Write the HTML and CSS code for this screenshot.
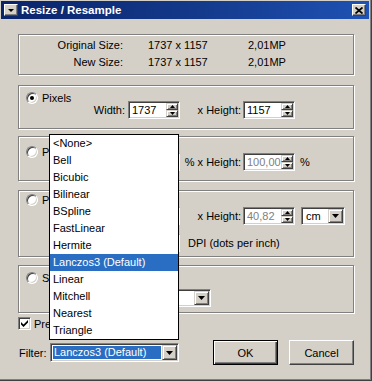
FILE: index.html
```html
<!DOCTYPE html>
<html>
<head>
<meta charset="utf-8">
<link rel="stylesheet" href="styles.css">
</head>
<body>
<div class="window">
  <div class="titlebar">
    <div class="sysbtn"><svg width="6" height="3" viewBox="0 0 6 3"><path d="M0 0 H6 L3 3Z" fill="#000"/></svg></div>
    <div class="title">Resize / Resample</div>
    <div class="closebtn"><svg width="8" height="7" viewBox="0 0 8 7"><path d="M0.5 0.5 L7.5 6.5 M7.5 0.5 L0.5 6.5" stroke="#000" stroke-width="1.8" fill="none"/></svg></div>
  </div>

  <div class="content">
    <div class="group g1">
      <div class="sizes">
        <div class="slabel">Original Size:</div><div>1737 x 1157</div><div>2,01MP</div>
        <div class="slabel">New Size:</div><div>1737 x 1157</div><div>2,01MP</div>
      </div>
    </div>

    <div class="group g2">
      <div class="optrow">
        <span class="radio on"></span><span class="optlabel">Pixels</span>
      </div>
      <div class="frow">
        <span class="lab1">Width:</span>
        <div class="field"><span class="val">1737</span>
          <div class="spin">
            <span class="sb"><svg width="5" height="3" viewBox="0 0 5 3"><path d="M0 3 L2.5 0 L5 3Z"/></svg></span>
            <span class="sb"><svg width="5" height="3" viewBox="0 0 5 3"><path d="M0 0 L5 0 L2.5 3Z"/></svg></span>
          </div>
        </div>
        <span class="lab2">x Height:</span>
        <div class="field"><span class="val">1157</span>
          <div class="spin">
            <span class="sb"><svg width="5" height="3" viewBox="0 0 5 3"><path d="M0 3 L2.5 0 L5 3Z"/></svg></span>
            <span class="sb"><svg width="5" height="3" viewBox="0 0 5 3"><path d="M0 0 L5 0 L2.5 3Z"/></svg></span>
          </div>
        </div>
      </div>
    </div>

    <div class="group g3">
      <div class="optrow">
        <span class="radio"></span><span class="optlabel">Percent</span>
      </div>
      <div class="frow">
        <span class="lab1"></span>
        <div class="field"><span class="val dis"></span>
          <div class="spin">
            <span class="sb"><svg width="5" height="3" viewBox="0 0 5 3"><path d="M0 3 L2.5 0 L5 3Z"/></svg></span>
            <span class="sb"><svg width="5" height="3" viewBox="0 0 5 3"><path d="M0 0 L5 0 L2.5 3Z"/></svg></span>
          </div>
        </div>
        <span class="lab2">% x Height:</span>
        <div class="field"><span class="val dis">100,00</span>
          <div class="spin">
            <span class="sb"><svg width="5" height="3" viewBox="0 0 5 3"><path d="M0 3 L2.5 0 L5 3Z"/></svg></span>
            <span class="sb"><svg width="5" height="3" viewBox="0 0 5 3"><path d="M0 0 L5 0 L2.5 3Z"/></svg></span>
          </div>
        </div>
        <span class="unit">%</span>
      </div>
    </div>

    <div class="group g4">
      <div class="optrow">
        <span class="radio"></span><span class="optlabel">Print</span>
      </div>
      <div class="frow">
        <span class="lab1"></span>
        <div class="field"><span class="val dis"></span>
          <div class="spin">
            <span class="sb"><svg width="5" height="3" viewBox="0 0 5 3"><path d="M0 3 L2.5 0 L5 3Z"/></svg></span>
            <span class="sb"><svg width="5" height="3" viewBox="0 0 5 3"><path d="M0 0 L5 0 L2.5 3Z"/></svg></span>
          </div>
        </div>
        <span class="lab2">x Height:</span>
        <div class="field"><span class="val dis">40,82</span>
          <div class="spin">
            <span class="sb"><svg width="5" height="3" viewBox="0 0 5 3"><path d="M0 3 L2.5 0 L5 3Z"/></svg></span>
            <span class="sb"><svg width="5" height="3" viewBox="0 0 5 3"><path d="M0 0 L5 0 L2.5 3Z"/></svg></span>
          </div>
        </div>
        <div class="combo cm"><span class="ctext">cm</span>
          <span class="cbtn"><svg width="7" height="4" viewBox="0 0 7 4"><path d="M0 0 H7 L3.5 4Z"/></svg></span>
        </div>
      </div>
      <div class="frow dpirow">
        <span class="lab1"></span>
        <div class="field"><span class="val dis"></span>
          <div class="spin">
            <span class="sb"><svg width="5" height="3" viewBox="0 0 5 3"><path d="M0 3 L2.5 0 L5 3Z"/></svg></span>
            <span class="sb"><svg width="5" height="3" viewBox="0 0 5 3"><path d="M0 0 L5 0 L2.5 3Z"/></svg></span>
          </div>
        </div>
        <span class="dpi">DPI (dots per inch)</span>
      </div>
    </div>

    <div class="group g5">
      <div class="optrow">
        <span class="radio"></span><span class="optlabel">Std</span>
      </div>
      <div class="frow">
        <span class="lab1"></span>
        <div class="combo std"><span class="ctext"></span>
          <span class="cbtn"><svg width="7" height="4" viewBox="0 0 7 4"><path d="M0 0 H7 L3.5 4Z"/></svg></span>
        </div>
      </div>
    </div>

    <div class="checkrow">
      <span class="check"><svg width="7" height="7" viewBox="0 0 7 7"><path d="M0 2 L2.5 4.5 L7 0 L7 2.6 L2.5 7 L0 4.6Z" fill="#000"/></svg></span>
      <span class="checklabel">Preserve</span>
    </div>

    <div class="bottomrow">
      <span class="flabel">Filter:</span>
      <div class="combo filter"><span class="ctext sel">Lanczos3 (Default)</span>
        <span class="cbtn"><svg width="7" height="4" viewBox="0 0 7 4"><path d="M0 0 H7 L3.5 4Z"/></svg></span>
      </div>
      <div class="btn default">OK</div>
      <div class="btn">Cancel</div>
    </div>
  </div>

  <div class="droplist">
    <div class="item">&lt;None&gt;</div>
    <div class="item">Bell</div>
    <div class="item">Bicubic</div>
    <div class="item">Bilinear</div>
    <div class="item">BSpline</div>
    <div class="item">FastLinear</div>
    <div class="item">Hermite</div>
    <div class="item sel">Lanczos3 (Default)</div>
    <div class="item">Linear</div>
    <div class="item">Mitchell</div>
    <div class="item">Nearest</div>
    <div class="item">Triangle</div>
  </div>
</div>
</body>
</html>
```

FILE: styles.css
```css
* { box-sizing: border-box; }
html, body { margin: 0; padding: 0; }
body {
  background: #d4d0c8;
  font-family: "Liberation Sans", Arial, sans-serif;
  font-size: 11px;
  color: #000;
}
.window {
  position: relative;
  width: 372px;
  height: 381px;
  background: #d4d0c8;
  box-shadow: inset -1px -1px #404040, inset -2px -2px #808080;
  overflow: hidden;
}

/* Title bar */
.titlebar {
  margin: 1px 3px 0 1px;
  height: 18px;
  background: linear-gradient(90deg, #0a246a 0%, #143a8c 55%, #1f52b4 100%);
  display: flex;
  align-items: center;
  padding: 0 3px 0 3px;
}
.sysbtn, .closebtn {
  width: 14px;
  height: 12px;
  flex: none;
  background: #d4d0c8;
  border: 1px solid;
  border-color: #fff #404040 #404040 #fff;
  box-shadow: inset -1px -1px #808080;
  display: flex;
  align-items: center;
  justify-content: center;
}
.sysbtn svg, .closebtn svg { display: block; }
.title {
  flex: 1;
  margin-left: 3px;
  color: #fff;
  font-weight: bold;
  font-size: 11.5px;
  line-height: 18px;
  white-space: nowrap;
}

/* Content */
.content {
  padding: 0 18px;
}
.group {
  border: 1px solid #808080;
  box-shadow: inset 1px 1px #fff, 1px 1px #fff;
}
.g1 { margin-top: 15px; height: 41px; padding-top: 2px; }
.g2 { margin-top: 10px; height: 44px; padding: 6px 0 0 7px; }
.g3 { margin-top: 7px; height: 45px; padding: 9px 0 0 7px; }
.g4 { margin-top: 9px; height: 67px; padding: 3px 0 0 7px; }
.g5 { margin-top: 8px; height: 48px; padding: 6px 0 0 7px; }

.sizes {
  display: grid;
  grid-template-columns: 129px 100px auto;
  line-height: 17px;
  white-space: nowrap;
}
.slabel { text-align: right; padding-right: 25px; }

.optrow {
  display: flex;
  align-items: flex-start;
  height: 9px;
  white-space: nowrap;
}
.g3 .optrow { height: 7px; }
.g4 .optrow { height: 13px; }
.g5 .optrow { height: 17px; }
.optlabel { margin-left: 4px; line-height: 12px; }

.radio {
  position: relative;
  flex: none;
  width: 12px;
  height: 12px;
  border-radius: 50%;
  background: #fff;
  border: 1px solid;
  border-color: #808080 #fff #fff #808080;
  box-shadow: inset 1px 1px #404040, inset -1px -1px #d4d0c8;
}
.radio.on::after {
  content: "";
  position: absolute;
  left: 3px;
  top: 3px;
  width: 4px;
  height: 4px;
  border-radius: 50%;
  background: #000;
}

.frow {
  display: flex;
  align-items: center;
  height: 18px;
  white-space: nowrap;
}
.dpirow { margin-top: 9px; }
.lab1 { width: 99px; text-align: right; margin-right: 3px; flex: none; }
.lab2 { width: 61px; text-align: right; margin-right: 2px; flex: none; }
.unit { margin-left: 5px; }
.dpi { margin-left: 8px; }

.field {
  display: flex;
  flex: none;
  width: 52px;
  height: 18px;
  background: #fff;
  border: 1px solid;
  border-color: #808080 #fff #fff #808080;
  box-shadow: inset 1px 1px #404040, inset -1px -1px #d4d0c8;
  padding: 1px;
}
.val {
  flex: 1;
  padding-left: 2px;
  line-height: 14px;
  overflow: hidden;
}
.val.dis { color: #808080; }
.spin {
  width: 12px;
  height: 14px;
  display: flex;
  flex-direction: column;
  flex: none;
}
.sb {
  height: 7px;
  background: #d4d0c8;
  border: 1px solid;
  border-color: #d4d0c8 #404040 #404040 #d4d0c8;
  box-shadow: inset 1px 1px #fff, inset -1px -1px #808080;
  display: flex;
  align-items: center;
  justify-content: center;
}
.sb svg { display: block; fill: #000; }

.combo {
  display: flex;
  flex: none;
  height: 18px;
  background: #fff;
  border: 1px solid;
  border-color: #808080 #fff #fff #808080;
  box-shadow: inset 1px 1px #404040, inset -1px -1px #d4d0c8;
  padding: 1px;
}
.combo.cm { width: 44px; margin-left: 6px; }
.combo.std { width: 83px; }
.combo.filter { width: 129px; height: 19px; }
.ctext {
  flex: 1;
  padding-left: 3px;
  line-height: 14px;
  overflow: hidden;
  white-space: nowrap;
}
.filter .ctext { line-height: 13px; }
.ctext.sel {
  margin: 1px;
  padding-left: 1px;
  background: #2a6ec3;
  color: #fff;
}
.cbtn {
  width: 15px;
  flex: none;
  background: #d4d0c8;
  border: 1px solid;
  border-color: #d4d0c8 #404040 #404040 #d4d0c8;
  box-shadow: inset 1px 1px #fff, inset -1px -1px #808080;
  display: flex;
  align-items: center;
  justify-content: center;
}
.cbtn svg { display: block; fill: #000; }

.checkrow {
  margin-top: 4px;
  height: 13px;
  display: flex;
  align-items: center;
  white-space: nowrap;
}
.check {
  width: 13px;
  height: 13px;
  flex: none;
  background: #fff;
  border: 1px solid;
  border-color: #808080 #fff #fff #808080;
  box-shadow: inset 1px 1px #404040, inset -1px -1px #d4d0c8;
  display: flex;
  align-items: center;
  justify-content: center;
}
.check svg { display: block; }
.checklabel { margin-left: 3px; }

.bottomrow {
  margin-top: 10px;
  height: 25px;
  display: flex;
  align-items: center;
}
.flabel { width: 32px; padding-left: 1px; flex: none; }
.btn {
  width: 65px;
  height: 25px;
  flex: none;
  background: #d4d0c8;
  border: 1px solid;
  border-color: #fff #404040 #404040 #fff;
  box-shadow: inset -1px -1px #808080;
  display: flex;
  align-items: center;
  justify-content: center;
}
.btn.default {
  margin-left: auto;
  margin-right: 11px;
  border-color: #000;
  box-shadow: inset 1px 1px #fff, inset -1px -1px #404040, inset -2px -2px #808080;
}

/* Open dropdown list (overlay) */
.droplist {
  position: absolute;
  left: 49px;
  top: 134px;
  width: 130px;
  background: #fff;
  border: 1px solid #000;
}
.item {
  height: 17px;
  line-height: 17px;
  padding-left: 3px;
  white-space: nowrap;
}
.item.sel {
  background: #2a6ec3;
  color: #fff;
}
```
